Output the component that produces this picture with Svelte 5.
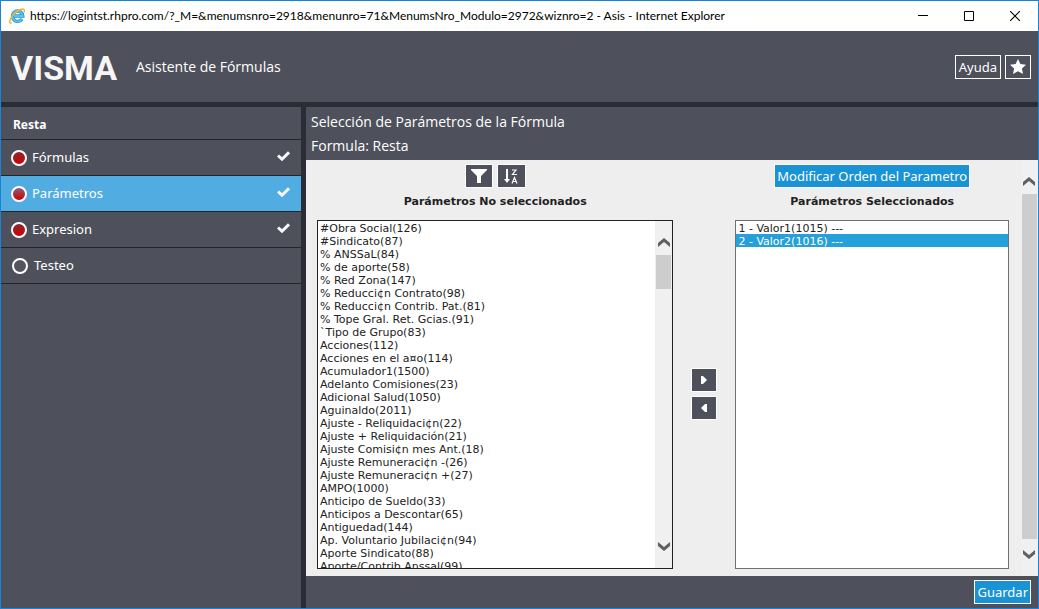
<script>
  const steps = [
    { name: 'Fórmulas', done: true },
    { name: 'Parámetros', done: true, active: true },
    { name: 'Expresion', done: true },
    { name: 'Testeo', done: false }
  ];
  const available = [
    '#Obra Social(126)', '#Sindicato(87)', '% ANSSaL(84)', '% de aporte(58)',
    '% Red Zona(147)', '% Reducci¢n Contrato(98)', '% Reducci¢n Contrib. Pat.(81)',
    '% Tope Gral. Ret. Gcias.(91)', '`Tipo de Grupo(83)', 'Acciones(112)',
    'Acciones en el a¤o(114)', 'Acumulador1(1500)', 'Adelanto Comisiones(23)',
    'Adicional Salud(1050)', 'Aguinaldo(2011)', 'Ajuste - Reliquidaci¢n(22)',
    'Ajuste + Reliquidación(21)', 'Ajuste Comisi¢n mes Ant.(18)',
    'Ajuste Remuneraci¢n -(26)', 'Ajuste Remuneraci¢n +(27)', 'AMPO(1000)',
    'Anticipo de Sueldo(33)', 'Anticipos a Descontar(65)', 'Antiguedad(144)',
    'Ap. Voluntario Jubilaci¢n(94)', 'Aporte Sindicato(88)', 'Aporte/Contrib Anssal(99)'
  ];
  const chosen = ['1 - Valor1(1015) ---', '2 - Valor2(1016) ---'];
</script>

{#snippet chevron(down)}
  <svg width="12" height="9" viewBox="0 0 12 9" aria-hidden="true">
    <path d={down ? 'M0 0l6 5 6-5v4L6 9 0 4z' : 'M0 9l6-5 6 5V5L6 0 0 5z'} fill="#606060" />
  </svg>
{/snippet}

<div class="window">
  <div class="titlebar">
    <svg class="ie" width="17" height="16" viewBox="0 0 17 16" aria-hidden="true">
      <path d="M13 11A5.200 5.200 0 1 1 13.800 8H5" fill="none" stroke="#1f8fd6" stroke-width="3.400" />
      <path d="M13 11A5.200 5.200 0 1 1 13.800 8H5" fill="none" stroke="#5cc4f2" stroke-width="1.800" />
      <path d="M2.600 14.800C.4 15.800.2 13.600 1.500 11 3.400 7 8 2.600 12.300 1.200c3-.9 3.700.8 2.700 3.200" fill="none" stroke="#f2b62c" stroke-width="1.500" />
    </svg>
    <span class="caption">https://logintst.rhpro.com/?_M=&amp;menumsnro=2918&amp;menunro=71&amp;MenumsNro_Modulo=2972&amp;wiznro=2 - Asis - Internet Explorer</span>
    <div class="sys">
      <button aria-label="Minimizar"><svg width="10" height="10" viewBox="0 0 10 10"><path d="M0 4.500h10" stroke="#000" /></svg></button>
      <button aria-label="Maximizar"><svg width="10" height="10" viewBox="0 0 10 10"><path d="M.5.5h9v9h-9z" fill="none" stroke="#000" /></svg></button>
      <button aria-label="Cerrar"><svg width="10" height="10" viewBox="0 0 10 10"><path d="M0 0l10 10M10 0L0 10" stroke="#000" stroke-width="1.100" /></svg></button>
    </div>
  </div>

  <header>
    <span class="logo">VISMA</span>
    <h1>Asistente de Fórmulas</h1>
    <div class="tools">
      <button class="line">Ayuda</button>
      <button class="line star" aria-label="Favorito">
        <svg width="16" height="15" viewBox="0 0 16 15"><path d="M8 0l2.400 5 5.600.7-4.100 3.700 1.100 5.600L8 12.200 3 15l1.100-5.600L0 5.700 5.600 5z" fill="#fff" /></svg>
      </button>
    </div>
  </header>

  <div class="body">
    <nav>
      <h2>Resta</h2>
      {#each steps as step}
        <a href="#{step.name}" class:active={step.active} class:pending={!step.done}>
          <span class="dot"></span>
          <span class="name">{step.name}</span>
          {#if step.done}
            <svg class="tick" width="13" height="10" viewBox="0 0 13 10" aria-hidden="true"><path d="M1 4.500l4 3.700L12 1.300" fill="none" stroke="#f6f7fa" stroke-width="3" /></svg>
          {/if}
        </a>
      {/each}
    </nav>

    <main>
      <div class="heading">
        <p>Selección de Parámetros de la Fórmula</p>
        <p>Formula: Resta</p>
      </div>

      <div class="scroller">
        <div class="picker">
          <section>
            <div class="actions">
              <button class="icon" aria-label="Filtrar">
                <svg width="16" height="14" viewBox="0 0 16 14"><path d="M0 0h16v1L10 7v7H6V7L0 1z" fill="#fff" /></svg>
              </button>
              <button class="icon wide" aria-label="Ordenar">
                <svg width="14" height="15" viewBox="0 0 14 15" fill="none" stroke="#fff">
                  <path d="M3 0v11" stroke-width="2" />
                  <path d="M0 10h6l-3 4z" fill="#fff" stroke="none" />
                  <path d="M8 1h4L8.500 5.500H13M8 14.500l2.500-6 2.500 6M9 12.500h3" stroke-width="1.200" />
                </svg>
              </button>
            </div>
            <label for="available">Parámetros No seleccionados</label>
            <div class="listbox">
              <select id="available" multiple>
                {#each available as item}<option>{item}</option>{/each}
              </select>
              <div class="bar inner">{@render chevron(false)}<i></i>{@render chevron(true)}</div>
            </div>
          </section>

          <div class="moves">
            <button class="icon" aria-label="Agregar"><svg width="6" height="8" viewBox="0 0 6 8"><path d="M0 0h2l4 4-4 4H0z" fill="#fff" /></svg></button>
            <button class="icon" aria-label="Quitar"><svg width="6" height="8" viewBox="0 0 6 8"><path d="M6 0H4L0 4l4 4h2z" fill="#fff" /></svg></button>
          </div>

          <section>
            <div class="actions"><button class="blue">Modificar Orden del Parametro</button></div>
            <label for="chosen">Parámetros Seleccionados</label>
            <div class="listbox soft">
              <select id="chosen" multiple>
                {#each chosen as item, i}<option selected={i === 1}>{item}</option>{/each}
              </select>
            </div>
          </section>
        </div>
        <div class="bar outer">{@render chevron(false)}<i></i>{@render chevron(true)}</div>
      </div>

      <footer><button class="blue">Guardar</button></footer>
    </main>
  </div>
</div>

<style>
  :global(body) { margin: 0; }
  * { box-sizing: border-box; }
  h1, h2, p { margin: 0; font-weight: 400; }
  button { padding: 0; border: 0; background: none; font: inherit; color: inherit; }
  svg { display: block; flex: none; }
  .window {
    display: flex; flex-direction: column; height: 100vh; min-height: 400px;
    border: 1px solid #1883d7; background: #2a2d35; color: #fff;
    font-family: "Noto Sans", "Open Sans", sans-serif; font-size: 13px;
  }
  .titlebar { display: flex; align-items: center; flex: none; height: 30px; padding-left: 8px; gap: 4px; background: #fff; color: #000; }
  .caption { flex: 1; min-width: 0; overflow: hidden; white-space: nowrap; font: 12px/16px Lato, "Open Sans", sans-serif; }
  .sys { display: flex; }
  .sys button { display: grid; place-items: center; width: 46px; height: 28px; }
  header { display: flex; align-items: center; flex: none; height: 71px; padding: 0 7px 0 10px; background: #4e515b; }
  .logo { width: 125px; padding-top: 3px; color: #f6f6f6; font: bold 34px/40px Roboto, sans-serif; }
  h1 { flex: 1; font: 14px/20px "Open Sans", sans-serif; }
  .tools { display: flex; gap: 4px; }
  .line { display: grid; place-items: center; height: 24px; padding: 0 3px; border: 1px solid #fff; line-height: 20px; }
  .star { width: 26px; }
  .body { display: grid; grid-template-columns: 300px minmax(0, 1fr); gap: 5px; flex: 1; min-height: 0; margin-top: 5px; }
  nav { background: #4e515b; }
  h2 { height: 33px; padding: 2px 12px 0; border-bottom: 1px solid #22252b; font: bold 12px/32px "Noto Sans", sans-serif; }
  nav a { display: flex; align-items: center; height: 36px; padding: 0 11px 0 10px; gap: 5px; border-bottom: 1px solid #22252b; color: #fff; text-decoration: none; }
  nav a.active { background: #51ade1; }
  nav a.pending { padding-left: 11px; gap: 6px; }
  .dot { width: 16px; height: 16px; border: 2px solid #fff; border-radius: 50%; background: linear-gradient(#8b2831, #d00000); }
  .active .dot { background: linear-gradient(#8f5d7c, #d00000); }
  .pending .dot { background: #50555f; }
  .name { flex: 1; padding-bottom: 2px; }
  .tick { margin-bottom: 3px; }
  main { display: flex; flex-direction: column; min-width: 0; min-height: 0; }
  .heading { height: 53px; padding: 3px 5px; background: #4e515b; font: 14px/24px "Open Sans", sans-serif; }
  .scroller { display: flex; flex: 1; min-height: 0; background: #eee; color: #222; }
  .picker { display: grid; grid-template-columns: 357fr 62px 274fr; flex: 1; min-width: 0; padding: 4px 12px 7px 11px; }
  section { display: flex; flex-direction: column; align-items: center; min-width: 0; min-height: 0; }
  .actions { display: flex; gap: 4px; }
  .icon { display: grid; place-items: center; width: 28px; height: 24px; border: 1px solid #fff; background: #4e515b; }
  .wide { width: 29px; }
  label { margin: 7px 0 11px; font: bold 11px/14px "DejaVu Sans", Verdana, sans-serif; }
  .listbox { display: flex; flex: 1; width: 100%; min-height: 0; border: 1px solid #222; background: #fff; }
  .soft { border-color: #707070; }
  select { flex: 1; min-width: 0; height: 100%; padding: 0; border: 0; border-radius: 0; outline: 0; overflow: hidden; background: #fff; color: #222; font: 11px/13px "DejaVu Sans", Verdana, sans-serif; }
  option { height: 13px; min-height: 0; padding: 1px 2px 0; line-height: 13px; }
  option:checked { background: linear-gradient(#26a0da, #26a0da); color: #fff; }
  .bar { display: flex; flex-direction: column; align-items: center; flex: none; width: 17px; background: #f0f0f0; }
  .bar i { width: 15px; background: #cdcdcd; }
  .inner { padding: 17px 0; }
  .inner i { height: 34px; margin: 8px 0 auto; }
  .outer { padding: 17px 1px 17px 0; }
  .outer i { flex: 1; margin: 8px 0 11px; }
  .moves { display: flex; flex-direction: column; align-items: center; justify-content: center; gap: 4px; padding-top: 54px; }
  .moves .icon { width: 26px; }
  .blue { height: 24px; padding: 0 2px; border: 1px solid #fff; background: #1992d6; color: #fff; line-height: 20px; white-space: nowrap; }
  footer { display: flex; justify-content: flex-end; align-items: center; flex: none; height: 32px; padding: 0 7px; background: #4e515b; }
</style>
